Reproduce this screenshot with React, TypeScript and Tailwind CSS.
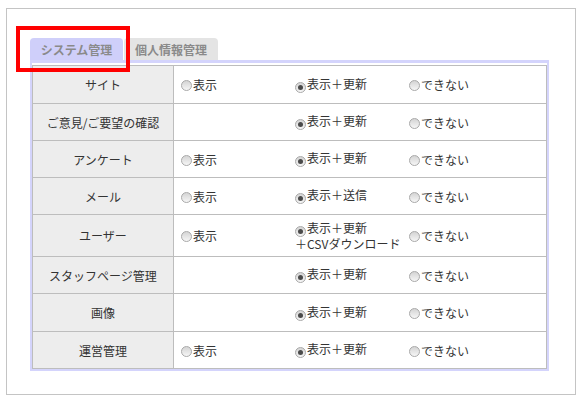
import React from 'react';

// ─── Datos ────────────────────────────────────────────────────────────────────

type Opcion = { label: React.ReactNode; checked?: boolean } | null;

interface Fila {
    nombre: string;
    alto: string;
    opciones: [Opcion, Opcion, Opcion];
}

const VER: Opcion = { label: '表示' };
const VER_EDIT: Opcion = { label: '表示＋更新', checked: true };
const NADA: Opcion = { label: 'できない' };

const FILAS: Fila[] = [
    { nombre: 'サイト', alto: 'h-[38px]', opciones: [VER, VER_EDIT, NADA] },
    { nombre: 'ご意見/ご要望の確認', alto: 'h-[37px]', opciones: [null, VER_EDIT, NADA] },
    { nombre: 'アンケート', alto: 'h-[37px]', opciones: [VER, VER_EDIT, NADA] },
    { nombre: 'メール', alto: 'h-[37px]', opciones: [VER, { label: '表示＋送信', checked: true }, NADA] },
    {
        nombre: 'ユーザー',
        alto: 'h-[42px]',
        opciones: [VER, { label: <>表示＋更新<br />＋CSVダウンロード</>, checked: true }, NADA],
    },
    { nombre: 'スタッフページ管理', alto: 'h-[37px]', opciones: [null, VER_EDIT, NADA] },
    { nombre: '画像', alto: 'h-[38px]', opciones: [null, VER_EDIT, NADA] },
    { nombre: '運営管理', alto: 'h-[37px]', opciones: [VER, VER_EDIT, NADA] },
];

// ─── Componentes ──────────────────────────────────────────────────────────────

function Radio({ checked }: { checked?: boolean }) {
    return (
        <span className="inline-flex align-[-1px] items-center justify-center w-[11px] h-[11px] rounded-full border border-[#a9a9a9] bg-gradient-to-b from-[#d4d4d4] to-[#f6f6f6] mr-[1px]">
            {checked && <span className="w-[5px] h-[5px] rounded-full bg-[#4a4a4a]" />}
        </span>
    );
}

export default function App() {
    return (
        <div
            className="relative w-[584px] h-[403px] bg-white text-[#333] text-[12px] leading-[13px]"
            style={{ fontFamily: '"Noto Sans CJK JP", "Noto Sans", sans-serif' }}
        >
            <div className="absolute left-[6px] top-[8px] w-[570px] h-[387px] border border-[#c4c4c4] pl-[23px] pt-[29px]">
                {/* Pestañas */}
                <div className="flex h-[22px]">
                    <div className="w-[93px] rounded-t-[4px] bg-[#cfcffa] text-[#8a8a8a] font-bold flex items-center justify-center">
                        システム管理
                    </div>
                    <div className="w-[94px] ml-px rounded-t-[4px] bg-[#e4e4e4] text-[#8a8a8a] font-bold flex items-center justify-center">
                        個人情報管理
                    </div>
                </div>

                {/* Panel */}
                <div className="w-[519px] border-2 border-t-[3px] border-[#d4d4fc] pt-[2px]">
                    <div className="border border-[#bdbdbd] border-b-0">
                        {FILAS.map(f => (
                            <div key={f.nombre} className={`flex border-b border-[#bdbdbd] ${f.alto}`}>
                                <div className="w-[141px] shrink-0 bg-[#ededed] border-r border-[#bdbdbd] flex items-center justify-center">
                                    {f.nombre}
                                </div>
                                <div className="flex items-center pl-[7px]">
                                    {f.opciones.map((o, i) => (
                                        <div key={i} className="w-[114px]">
                                            {o && (
                                                <span>
                                                    <Radio checked={o.checked} />
                                                    {o.label}
                                                </span>
                                            )}
                                        </div>
                                    ))}
                                </div>
                            </div>
                        ))}
                    </div>
                </div>
            </div>

            {/* Marca roja */}
            <div className="absolute left-[16px] top-[26px] w-[114px] h-[46px] border-4 border-[#ff0000]" />
        </div>
    );
}
